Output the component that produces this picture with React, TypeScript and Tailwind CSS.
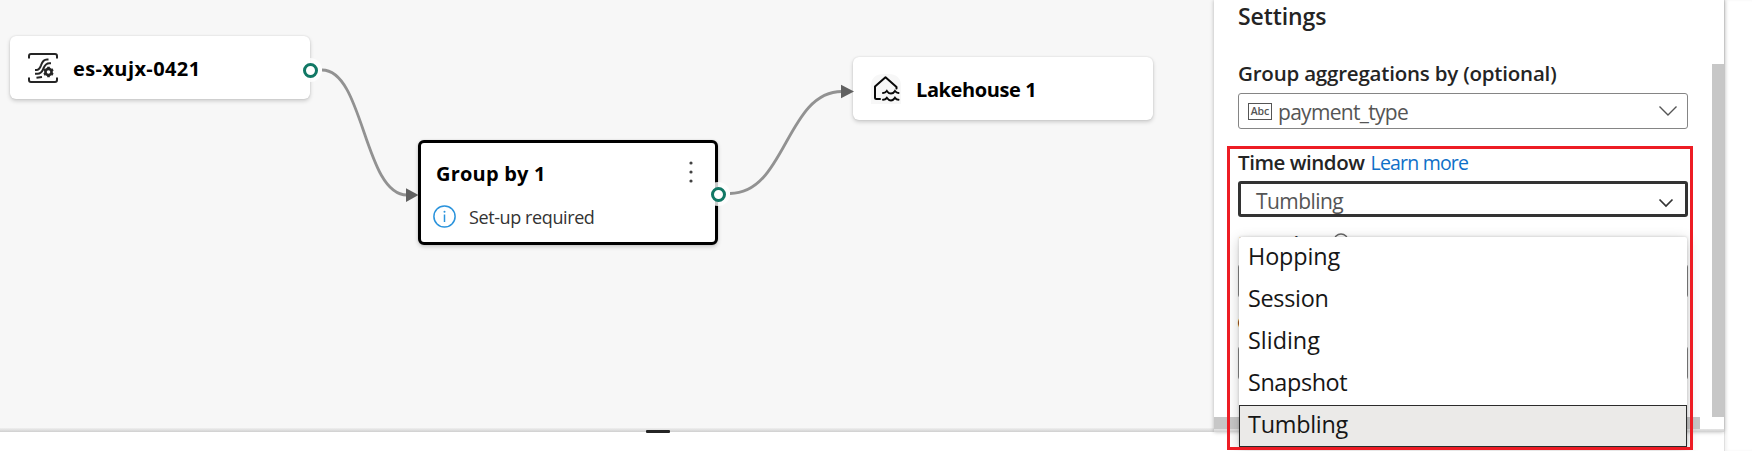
import type { ReactNode } from "react";

function EventstreamIcon() {
  return (
    <svg width="30" height="30" viewBox="0 0 30 30" fill="none" stroke="#252525" className="shrink-0">
      <path d="M1 5.500V3a2 2 0 0 1 2-2h24a2 2 0 0 1 2 2v2.500M1 24.500V27a2 2 0 0 0 2 2h24a2 2 0 0 0 2-2v-2.500" strokeWidth="2" />
      <path d="M7 17h1.500c3 0 3.500-2 4.500-4.700C14.200 8.800 15.500 6.500 19 6.500h1.500" strokeWidth="2" />
      <path d="M7 20.700h2.500c4 0 5-3 6-5.500 1.300-3.200 2.500-5 6-5h1.500" strokeWidth="2" />
      <path d="M8.500 24.700l5.500-.7" strokeWidth="2" />
      <circle cx="20.500" cy="19" r="3.100" strokeWidth="2.600" />
      <path d="M20.500 13.800v1.500M20.500 22.700v1.500M16 16.400l1.300.8M23.700 20.800l1.300.8M25 16.400l-1.300.8M17.300 20.800l-1.300.8" strokeWidth="2.600" />
    </svg>
  );
}

function LakehouseIcon() {
  return (
    <svg width="30" height="30" viewBox="0 0 30 30" fill="none" className="shrink-0">
      <path d="M0 30V12Q0 0 13 0h4Q30 0 30 12V30Z" fill="#f7f7f7" />
      <g stroke="#080808" strokeWidth="2" strokeLinecap="round">
        <path d="M9 25H5.500Q4 25 4 23.500V12.500L14.500 3.200 25.500 13v1.500" strokeLinejoin="round" />
        <path d="M12 19q2.200 0 3.800-2 1.800 2.600 4.200 2.600t4-2.600q1.600 2 3.500 2" />
        <path d="M12 25.800q2.200 0 3.800-2 1.800 2.600 4.200 2.600t4-2.600q1.600 2 3.500 2" />
      </g>
    </svg>
  );
}

function Port({ className }: { className: string }) {
  return (
    <span className={`absolute flex size-[24px] items-center justify-center rounded-full bg-white/80 ${className}`}>
      <span className="size-[15px] rounded-full border-[3px] border-[#117865] bg-white" />
    </span>
  );
}

function Node({ className, children }: { className: string; children: ReactNode }) {
  return (
    <div className={`absolute flex w-[300px] rounded-[6px] bg-white shadow-[0_2px_4px_rgba(0,0,0,0.18),0_0_2px_rgba(0,0,0,0.12)] ${className}`}>
      {children}
    </div>
  );
}

function Canvas() {
  return (
    <main className="relative h-[432px] w-[1214px] shrink-0 bg-[#f7f7f7]">
      <Node className="top-[36px] left-[10px] h-[63px] items-center pl-[18px]">
        <EventstreamIcon />
        <span className="ml-[15px] pt-[3px] text-[20px] leading-[28px] font-bold tracking-[0.4px] text-black">es-xujx-0421</span>
      </Node>
      <Node className="top-[140px] left-[418px] h-[105px] flex-col border-[3px] border-black">
        <div className="flex h-[56px] items-start justify-between pt-[18px] pr-[21px] pl-[15px]">
          <span className="text-[20px] leading-[26px] font-bold tracking-[0.2px] text-black">Group by 1</span>
          <svg width="6" height="24" viewBox="0 0 6 24" fill="#424242">
            <circle cx="3" cy="2" r="1.600" />
            <circle cx="3" cy="11" r="1.600" />
            <circle cx="3" cy="20" r="1.600" />
          </svg>
        </div>
        <div className="flex items-start pl-[12px]">
          <svg width="23" height="23" viewBox="0 0 23 23" fill="none" stroke="#2a93dc" className="mt-[6px]">
            <circle cx="11.500" cy="11.500" r="10.600" strokeWidth="1.500" />
            <path d="M11.500 9.500v7.500" strokeWidth="1.500" />
            <circle cx="11.500" cy="6.800" r="1" fill="#2a93dc" stroke="none" />
          </svg>
          <span className="ml-[13px] pt-[6px] text-[18px] leading-[25px] tracking-[-0.4px] text-[#333]">Set-up required</span>
        </div>
      </Node>
      <Node className="top-[57px] left-[853px] h-[63px] items-center pl-[18px]">
        <LakehouseIcon />
        <span className="ml-[15px] pt-[3px] text-[20px] leading-[28px] font-bold tracking-[-0.4px] text-black">Lakehouse 1</span>
      </Node>
      <svg width="1214" height="429" viewBox="0 0 1214 429" fill="none" className="absolute top-0 left-0">
        <g stroke="#929292" strokeWidth="2.800">
          <path d="M322 70C364 70 364 195 407 195" />
          <path d="M730 193.500C786 193.500 786 91.500 842 91.500" />
        </g>
        <path d="M406 188.300L418.500 195 406 202Z" fill="#616161" />
        <path d="M841 84.700L854 91.500 841 98.300Z" fill="#616161" />
      </svg>
      <Port className="top-[58px] left-[298px]" />
      <Port className="top-[182px] left-[706px]" />
      <div className="absolute bottom-0 left-0 h-[4px] w-full bg-linear-to-b from-[#f0f0f0] to-[#cfcfcf]" />
      <div className="absolute top-[430px] left-[646px] h-[3px] w-[24px] rounded-[1px] bg-[#242424]" />
    </main>
  );
}

const options = [
  { name: "Hopping", tracking: "tracking-[-0.1px]" },
  { name: "Session", tracking: "tracking-[-0.3px]" },
  { name: "Sliding", tracking: "tracking-[0px]" },
  { name: "Snapshot", tracking: "tracking-[-0.4px]" },
  { name: "Tumbling", tracking: "tracking-[-0.25px]" },
];

function WindowMenu() {
  return (
    <ul className="h-[210px] w-[448px] rounded-[2px] bg-white shadow-[0_3px_14px_rgba(0,0,0,0.2),0_0_3px_rgba(0,0,0,0.18)]">
      {options.map((o) => (
        <li
          key={o.name}
          className={`h-[42px] text-[23.4px] text-[#161616] ${o.tracking} ${
            o.name === "Tumbling" ? "border border-[#2b2b2b] bg-[#ebeae8] pl-[8px] leading-[37px]" : "pl-[9px] leading-[39px]"
          }`}
        >
          {o.name}
        </li>
      ))}
    </ul>
  );
}

function SettingsPanel() {
  return (
    <aside className="relative flex h-[432px] w-[510px] shrink-0 flex-col bg-white pr-[36px] pl-[24px] shadow-[0_0_4px_rgba(0,0,0,0.28)]">
      <h2 className="h-[61px] text-[23px] leading-[33px] font-semibold tracking-[-0.1px] text-[#242424]">Settings</h2>
      <div className="flex h-[32px] items-start text-[20.5px] leading-[24px] font-semibold tracking-[-0.2px] whitespace-nowrap text-[#242424]">
        Group aggregations by (optional)
      </div>
      <div className="flex h-[36px] shrink-0 items-center rounded-[3px] border border-[#858585] pr-[9px] pl-[9px]">
        <span className="flex h-[17px] w-[24px] items-center justify-center border-[1.500px] border-[#555] text-[10.5px] leading-[12px] font-semibold text-[#555]">Abc</span>
        <span className="ml-[6px] grow pt-[2px] text-[21px] leading-[28px] tracking-[-0.7px] text-[#555]">payment_type</span>
        <svg width="20" height="12" viewBox="0 0 20 12" fill="none" stroke="#555" strokeWidth="1.400">
          <path d="M1.500 1.500L10 10l8.500-8.500" />
        </svg>
      </div>
      <div className="flex h-[52px] shrink-0 items-start gap-[6px] pt-[21px] text-[20.5px] leading-[24px] whitespace-nowrap">
        <span className="font-semibold tracking-[-0.45px] text-[#242424]">Time window</span>
        <a className="pt-px text-[19.5px] tracking-[-0.8px] text-[#0f70c8]">Learn more</a>
      </div>
      <div className="flex h-[36px] shrink-0 items-center rounded-[3px] border-[3px] border-[#333] pr-[11px] pl-[15px]">
        <span className="grow pt-[3px] text-[21px] leading-[28px] tracking-[-0.55px] text-[#555]">Tumbling</span>
        <svg width="16" height="10" viewBox="0 0 16 10" fill="none" stroke="#333" strokeWidth="1.700" className="mt-[7px]">
          <path d="M1.500 1.500L8 8l6.500-6.500" />
        </svg>
      </div>
      <div className="flex h-[47px] shrink-0 items-start pt-[15px] text-[20.5px] leading-[22px] font-semibold tracking-[-0.3px] text-[#242424]">
        <span className="w-[95px]">Duration</span>
        <svg width="16" height="16" viewBox="0 0 16 16" fill="none" stroke="#666" strokeWidth="1.400" className="mt-[1px]">
          <circle cx="8" cy="8" r="7" />
        </svg>
      </div>
      <div className="h-[34px] shrink-0 rounded-[3px] border border-[#858585]" />
      <div className="flex h-[48px] shrink-0 items-center text-[20.5px] leading-[24px] font-semibold text-[#242424]">
        <span className="-ml-px">Offset</span>
      </div>
      <div className="h-[34px] shrink-0 rounded-[3px] border border-[#858585]" />
      <div className="absolute bottom-[3px] left-0 h-[12px] w-[486px] bg-[#c7c7c7]" />
      <div className="absolute bottom-0 left-0 h-[3px] w-full bg-linear-to-b from-[#e4e4e4] to-[#d0d0d0]" />
      <div className="absolute top-[64px] right-0 h-[353px] w-[12px] bg-[#c7c7c7]" />
      <div className="absolute top-[237px] left-[25px]">
        <WindowMenu />
      </div>
      <div className="pointer-events-none absolute top-[146px] left-[13px] h-[304px] w-[466px] border-[3px] border-[#ed1c24]" />
    </aside>
  );
}

export default function App() {
  return (
    <div className="flex h-[451px] w-[1752px] items-start overflow-hidden bg-white font-['Open_Sans','Noto_Sans',sans-serif]">
      <Canvas />
      <SettingsPanel />
      <div className="h-[451px] grow border-l border-[#e0e0e0] bg-white shadow-[inset_2px_0_3px_rgba(0,0,0,0.05)]" />
    </div>
  );
}
